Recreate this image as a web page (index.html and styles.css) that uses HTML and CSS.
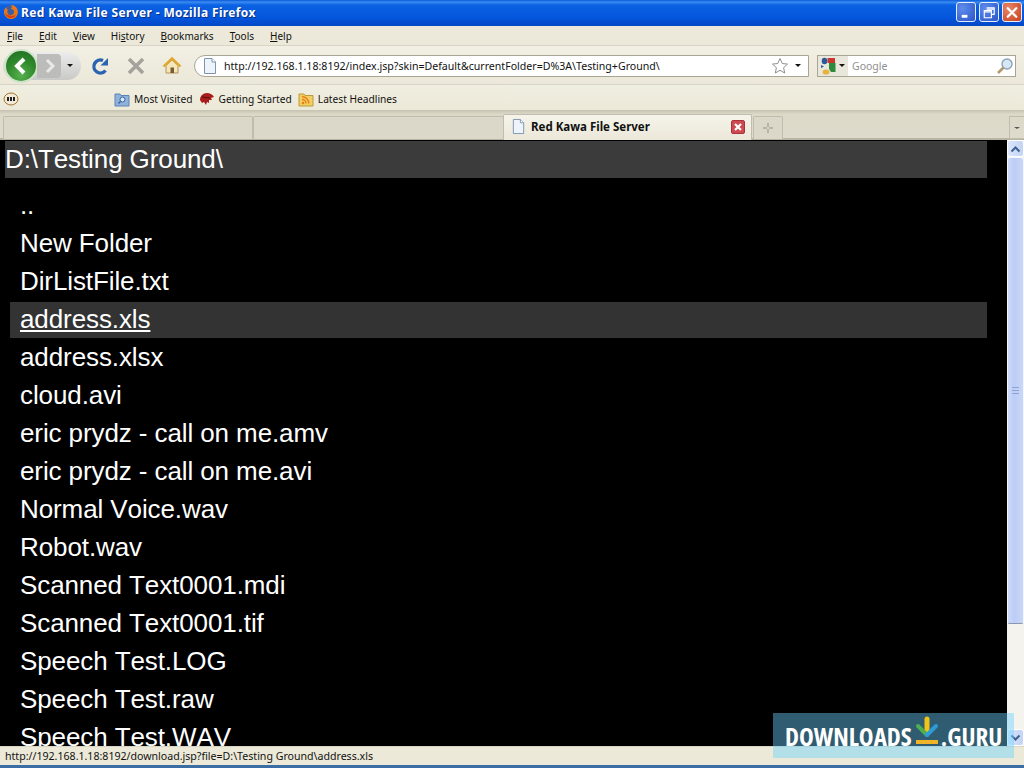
FILE: index.html
```html
<!DOCTYPE html>
<html lang="en">
<head>
<meta charset="utf-8">
<title>Red Kawa File Server - Mozilla Firefox</title>
<link rel="stylesheet" href="styles.css">
</head>
<body>
<div class="window">
  <header class="titlebar">
    <svg class="fx" width="16" height="16" viewBox="0 0 16 16"><circle cx="8" cy="8" r="7" fill="#3d5f9e"/><path d="M8 1a7 7 0 1 1-6.6 4.6C2 4 3 3.400 3.500 3.600 3.500 5 4 5.500 5 6c-1 1-1 3 .5 4.500 2 1.500 5 .5 5.500-2 .3-2-1-3.500-3-3.500C9 3.500 9 2 8 1z" fill="#e8761c"/><path d="M2 9c1 3 3 5 6 5 2 0 4-1 5-3-2 1-6 2-11-2z" fill="#d8400f"/></svg>
    <span class="title-text">Red Kawa File Server - Mozilla Firefox</span>
    <div class="win-buttons">
      <span class="win-btn"><svg width="19" height="19" viewBox="0 0 19 19"><rect x="5" y="12" width="6" height="3" fill="#fff"/></svg></span>
      <span class="win-btn"><svg width="19" height="19" viewBox="0 0 19 19"><path d="M7 4.500h8v7h-3M4.500 7.500h7.500v7.500H4.500zM4.500 9h7.500M7 6h8" fill="none" stroke="#fff" stroke-width="1.200"/></svg></span>
      <span class="win-btn close"><svg width="19" height="19" viewBox="0 0 19 19"><path d="M5 5l9 9M14 5l-9 9" stroke="#fff" stroke-width="2.400" stroke-linecap="round"/></svg></span>
    </div>
  </header>

  <nav class="menubar">
    <span><u>F</u>ile</span><span><u>E</u>dit</span><span><u>V</u>iew</span><span>Hi<u>s</u>tory</span><span><u>B</u>ookmarks</span><span><u>T</u>ools</span><span><u>H</u>elp</span>
  </nav>

  <div class="navbar">
    <div class="backforward">
      <span class="back"><svg width="30" height="30" viewBox="0 0 30 30"><path d="M18 8l-7 7 7 7" fill="none" stroke="#fff" stroke-width="4"/></svg></span>
      <span class="forward"><svg width="18" height="18" viewBox="0 0 18 18"><path d="M7 3l6 6-6 6" fill="none" stroke="#e8e8e8" stroke-width="3"/></svg></span>
      <span class="caret small"></span>
    </div>
    <svg class="tool reload" width="20" height="20" viewBox="0 0 20 20"><path d="M15.500 14.500A6.500 6.500 0 1 1 13 4.500" fill="none" stroke="#2a63b0" stroke-width="3.400"/><path d="M10.500 9.500l7.500 0 0-7.500z" fill="#2a63b0"/></svg>
    <svg class="tool stop" width="20" height="20" viewBox="0 0 20 20"><path d="M3 3l14 14M17 3L3 17" stroke="#a3a39c" stroke-width="3.600"/></svg>
    <svg class="tool home" width="20" height="20" viewBox="0 0 20 20"><path d="M4 9.500V17h12V9.500L10 4z" fill="#f3e6b8" stroke="#b5945a"/><path d="M1.500 10.500L10 2.500l8.500 8" fill="none" stroke="#e2a72c" stroke-width="2.400"/><rect x="8.500" y="11.500" width="3.500" height="5.500" fill="#7a5a30"/></svg>
    <div class="urlbar">
      <svg width="16" height="18" viewBox="0 0 16 18"><path d="M2.500 1.500h7.500l3.500 3.500v11.500h-11z" fill="#eef4fb" stroke="#7f93ad"/><path d="M10 1.500V5h3.500" fill="#fff" stroke="#7f93ad"/></svg>
      <span class="url">http://192.168.1.18:8192/index.jsp?skin=Default&amp;currentFolder=D%3A\Testing+Ground\</span>
      <svg width="18" height="18" viewBox="0 0 18 18"><path d="M9 1.500l2.300 5 5.200.6-3.900 3.600 1.100 5.300L9 13.300 4.300 16l1.100-5.300L1.500 7.100l5.200-.6z" fill="#fff" stroke="#8d8d88"/></svg>
      <span class="caret small url-caret"></span>
    </div>
    <div class="searchbar">
      <span class="engine">
        <svg width="17" height="18" viewBox="0 0 17 18"><ellipse cx="4.500" cy="4" rx="2.800" ry="3.200" fill="#2b5a9b"/><path d="M7.500 1H15v5H7.500z" fill="#c8382d"/><path d="M9 6h6.500v9H11l-2-3z" fill="#2e8b3c"/><ellipse cx="6" cy="15" rx="3.400" ry="2.600" fill="#e5b33c"/><path d="M1 8l3 1.500L1 11z" fill="#2b5a9b"/></svg>
        <span class="caret small"></span>
      </span>
      <span class="search-hint">Google</span>
      <svg class="lens" width="18" height="18" viewBox="0 0 18 18"><circle cx="11" cy="7" r="5" fill="#d8e7f5" stroke="#8aa3bb" stroke-width="1.400"/><path d="M7.500 10.500L2 16" stroke="#b39a6c" stroke-width="2.600"/></svg>
    </div>
  </div>

  <div class="bookmarks">
    <svg class="addon" width="16" height="14" viewBox="0 0 16 14"><ellipse cx="8" cy="7" rx="7" ry="6" fill="#f2ead8" stroke="#a5762f"/><path d="M5 5v4M8 5v4M11 5v4" stroke="#222" stroke-width="2"/></svg>
    <span class="bm first"><svg width="16" height="16" viewBox="0 0 16 16"><path d="M1 3h5l1 1.500h8V15H1z" fill="#8fb2dd" stroke="#5e83b5"/><circle cx="8.500" cy="8.500" r="2.500" fill="#dbe9f7" stroke="#37639c"/><path d="M6.500 10.500L4.500 12.500" stroke="#37639c" stroke-width="1.500"/></svg>Most Visited</span>
    <span class="bm"><svg width="16" height="16" viewBox="0 0 16 16"><path d="M1 9c0-4 3-7 7-7 3 0 5 1 7 4l-3 1 1 2-3 0 0 3-2-1-1 3-2-3-2 1z" fill="#a81c1c"/><path d="M3 6l8 1" stroke="#5a0c0c"/></svg>Getting Started</span>
    <span class="bm"><svg width="16" height="16" viewBox="0 0 16 16"><path d="M1 3h5l1 1.500h8V15H1z" fill="#f2cf62" stroke="#bc9a3a"/><circle cx="5" cy="12" r="1.300" fill="#e77f1a"/><path d="M4 8.500a4 4 0 0 1 4 4M4 5.800a6.500 6.500 0 0 1 6.800 6.700" fill="none" stroke="#e77f1a" stroke-width="1.500"/></svg>Latest Headlines</span>
  </div>

  <div class="tabbar">
    <span class="tab tab-a"></span>
    <span class="tab tab-b"></span>
    <span class="tab active">
      <svg width="15" height="17" viewBox="0 0 16 18"><path d="M2.500 1.500h7.500l3.500 3.500v11.500h-11z" fill="#eef4fb" stroke="#7f93ad"/><path d="M10 1.500V5h3.500" fill="#fff" stroke="#7f93ad"/></svg>
      <span class="tab-title">Red Kawa File Server</span>
      <span class="tab-close"><svg width="14" height="14" viewBox="0 0 14 14"><path d="M4 4l6 6M10 4l-6 6" stroke="#fff" stroke-width="2.200"/></svg></span>
    </span>
    <span class="tab newtab"><svg width="10" height="10" viewBox="0 0 10 10"><path d="M5 0v4M5 6v4M0 5h4M6 5h4" stroke="#8f8f86"/></svg></span>
    <span class="tablist"><span class="caret tiny"></span></span>
  </div>

  <div class="viewport">
    <main class="page">
      <h1 class="folder">D:\Testing Ground\</h1>
      <ul class="files">
        <li>..</li>
        <li>New Folder</li>
        <li>DirListFile.txt</li>
        <li class="hover"><a href="#">address.xls</a></li>
        <li>address.xlsx</li>
        <li>cloud.avi</li>
        <li>eric prydz - call on me.amv</li>
        <li>eric prydz - call on me.avi</li>
        <li>Normal Voice.wav</li>
        <li>Robot.wav</li>
        <li>Scanned Text0001.mdi</li>
        <li>Scanned Text0001.tif</li>
        <li>Speech Test.LOG</li>
        <li>Speech Test.raw</li>
        <li>Speech Test.WAV</li>
      </ul>
    </main>
    <aside class="scrollbar">
      <span class="sb-btn"><svg width="11" height="8" viewBox="0 0 11 8"><path d="M1.500 6.500l4-4 4 4" fill="none" stroke="#41608f" stroke-width="2"/></svg></span>
      <span class="sb-thumb"><span class="grip"></span></span>
      <span class="sb-rest"></span>
      <span class="sb-btn"><svg width="11" height="8" viewBox="0 0 11 8"><path d="M1.500 1.500l4 4 4-4" fill="none" stroke="#41608f" stroke-width="2"/></svg></span>
    </aside>
  </div>

  <footer class="statusbar">http://192.168.1.18:8192/download.jsp?file=D:\Testing Ground\address.xls</footer>
  <div class="frame-bottom"></div>

  <div class="watermark">
    <span>DOWNLOADS</span>
    <svg width="26" height="30" viewBox="2 0 26 30"><path d="M15 3v12" stroke="#f0c419" stroke-width="5" stroke-linecap="round"/><path d="M6 10l9 9" stroke="#4caf50" stroke-width="4" stroke-linecap="round"/><path d="M24 10l-9 9" stroke="#2e9bd6" stroke-width="4" stroke-linecap="round"/><rect x="4" y="24" width="22" height="4" fill="#f0b429"/></svg>
    <span>.GURU</span>
  </div>
</div>
</body>
</html>
```

FILE: styles.css
```css
* { box-sizing: border-box; }
html, body { margin: 0; height: 100%; overflow: hidden; }
body { background: #ece9d8; }
.window {
  position: relative;
  width: 1024px;
  height: 768px;
  display: flex;
  flex-direction: column;
  overflow: hidden;
  font-family: "Noto Sans", "DejaVu Sans", sans-serif;
  font-size: 11px;
  color: #111;
}
.titlebar {
  height: 26px;
  flex: none;
  display: flex;
  align-items: center;
  padding: 0 2px 0 3px;
  background: linear-gradient(#0a58d8 0, #3a8cf2 2px, #0c62e2 5px, #0455dc 18px, #0448c4 26px);
}
.fx { flex: none; margin-bottom: 2px; }
.title-text {
  margin-left: 2px;
  color: #fff;
  font-weight: 700;
  font-size: 12px;
  text-shadow: 1px 1px 0 #0a2f85;
  letter-spacing: .36px;
  margin-bottom: 2px;
}
.win-buttons { margin-left: auto; display: flex; gap: 3px; margin-bottom: 3px; }
.win-btn {
  width: 20px; height: 20px;
  border: 1px solid #e6eefb;
  border-radius: 3px;
  background: radial-gradient(circle at 30% 30%, #5f8cec, #2a55c8);
  display: flex;
}
.win-btn.close { background: radial-gradient(circle at 30% 30%, #e8876a, #c83f1c); }

.menubar {
  height: 20px;
  flex: none;
  display: flex;
  align-items: center;
  gap: 16px;
  padding: 0 0 0 7px;
  background: #ece9da;
  border-bottom: 1px solid #d8d5c4;
  font-size: 10px;
}
.navbar {
  height: 39px;
  flex: none;
  display: flex;
  align-items: center;
  padding: 1px 8px 0 3px;
  background: linear-gradient(#f2f0e4, #ebe8d9);
  border-bottom: 1px solid #d8d5c4;
}
.backforward {
  width: 78px;
  height: 28px;
  display: flex;
  align-items: center;
  background: linear-gradient(#ececec, #c9c9c6);
  border-radius: 14px;
  position: relative;
  flex: none;
}
.back {
  width: 34px; height: 34px;
  margin-left: 1px;
  flex: none;
  border-radius: 50%;
  border: 2px solid #cfe3c8;
  background: radial-gradient(circle at 50% 80%, #58b04e, #2f8a2c 50%, #1f6a22);
  display: flex;
  align-items: center;
  justify-content: center;
}
.forward {
  width: 24px; height: 24px;
  margin-left: -1px;
  display: flex;
  align-items: center;
  justify-content: center;
  background: #bcbcba;
  border-radius: 0 4px 4px 0;
}
.caret { width: 0; height: 0; display: inline-block; border-style: solid; border-color: #111 transparent transparent; }
.caret.small { border-width: 3px 3px 0; margin-left: 6px; }
.caret.tiny { border-width: 2px 3px 0; border-color: #555 transparent transparent; }
.tool { flex: none; }
.reload { margin-left: 9px; }
.stop { margin-left: 16px; }
.home { margin-left: 16px; }
.urlbar {
  margin-left: 12px;
  width: 615px;
  height: 22px;
  display: flex;
  align-items: center;
  padding: 0 6px 0 7px;
  border: 1px solid #a8a595;
  border-radius: 11px 0 0 11px;
  background: #fff;
  font-size: 10.600px;
}
.url { margin-left: 6px; flex: 1; white-space: nowrap; overflow: hidden; }
.url-caret { margin-left: 11px; margin-right: 1px; }
.searchbar {
  margin-left: 8px;
  width: 199px;
  height: 22px;
  display: flex;
  align-items: center;
  border: 1px solid #a8a595;
  background: #fff;
}
.engine {
  width: 30px; height: 20px;
  display: flex;
  align-items: center;
  padding-left: 2px;
  background: #e9e7dc;
  flex: none;
}
.engine .caret.small { margin-left: 2px; }
.search-hint { margin-left: 4px; color: #8f8f8f; font-size: 10.500px; flex: 1; }
.lens { margin-right: 1px; }

.bookmarks {
  height: 25px;
  flex: none;
  display: flex;
  align-items: center;
  padding: 2px 0 0 3px;
  background: linear-gradient(#f0eee0, #ece9d8);
  font-size: 10.200px;
}
.addon { flex: none; }
.bm { display: flex; align-items: center; gap: 4px; margin-left: 6px; }
.bm.first { margin-left: 95px; }

.tabbar {
  height: 30px;
  flex: none;
  display: flex;
  align-items: flex-end;
  background: linear-gradient(#c4c1b0 0, #dcd9c9 4px, #dedbcc 100%);
  border-bottom: 2px solid #b8b5a5;
  position: relative;
}
.tab {
  height: 23px;
  display: flex;
  align-items: center;
  background: #dbd8c9;
  border: 1px solid #c0bdac;
  border-bottom: 0;
  border-radius: 2px 2px 0 0;
  margin-bottom: -1px;
}
.tab-a { width: 250px; margin-left: 3px; }
.tab-b { width: 251px; }
.tab.active {
  width: 249px;
  height: 26px;
  margin-left: -1px;
  padding: 0 6px 2px 7px;
  background: linear-gradient(#f6f4ea, #ebe8da);
  position: relative;
  z-index: 1;
  margin-bottom: -2px;
}
.tab-title { margin-left: 5px; font-weight: 700; font-size: 11.500px; flex: 1; }
.tab-close {
  width: 14px; height: 14px;
  display: flex;
  border-radius: 2px;
  background: #cf4a50;
  border: 1px solid #a8343a;
}
.tab-close svg { margin: -1px; }
.newtab { width: 30px; margin-left: 1px; justify-content: center; }
.tablist {
  margin-left: auto;
  width: 15px; height: 23px;
  display: flex;
  align-items: center;
  justify-content: center;
  border: 1px solid #c0bdac;
  border-right: 0;
  margin-bottom: -1px;
}

.viewport {
  flex: 1;
  min-height: 0;
  display: flex;
  background: #000;
}
.page {
  flex: 1;
  min-width: 0;
  overflow: hidden;
  color: #fff;
  font-family: "Liberation Sans", Arial, sans-serif;
  font-size: 26px;
  font-kerning: none;
  letter-spacing: -.1px;
  padding: 1px 20px 0 5px;
}
.folder {
  margin: 0;
  height: 37px;
  line-height: 36px;
  font-size: 26px;
  font-weight: 400;
  background: #3b3b3b;
}
.files {
  list-style: none;
  margin: 10px 0 0 5px;
  padding: 0;
}
.files li {
  height: 36px;
  line-height: 34px;
  margin-bottom: 2px;
  padding-left: 10px;
  white-space: nowrap;
}
.files a { color: inherit; text-decoration: underline; }
.files .hover { background: #333; }

.scrollbar {
  width: 17px;
  flex: none;
  display: flex;
  flex-direction: column;
  background: #f4f3ed;
}
.sb-btn {
  height: 17px;
  flex: none;
  display: flex;
  align-items: center;
  justify-content: center;
  background: linear-gradient(90deg, #dce6fb, #c3d3f6);
  border: 1px solid #fff;
  border-radius: 3px;
}
.sb-thumb {
  height: 467px;
  flex: none;
  display: flex;
  align-items: center;
  justify-content: center;
  background: linear-gradient(90deg, #cddafa, #bccdf5 40%, #c9d7f8);
  border: 1px solid #f4f6fd;
  border-bottom-color: #8a97b3;
  border-radius: 3px;
}
.grip {
  width: 7px; height: 7px;
  border-top: 1px solid #8da4d6;
  border-bottom: 1px solid #8da4d6;
  background: linear-gradient(transparent 40%, #8da4d6 40%, #8da4d6 60%, transparent 60%);
}
.sb-rest { flex: 1; }

.statusbar {
  height: 19px;
  flex: none;
  padding: 1px 0 0 5px;
  background: #ece9d8;
  border-top: 1px solid #d8d5c4;
  font-size: 10.600px;
  line-height: 16px;
  position: relative;
}
.frame-bottom { height: 3px; flex: none; background: #3a6ea5; }

.watermark {
  position: absolute;
  left: 773px;
  top: 713px;
  width: 241px;
  height: 45px;
  display: flex;
  align-items: flex-start;
  padding: 9px 0 0 12px;
  background: rgba(107, 210, 255, .44);
  color: #fff;
  font-family: "Open Sans", "Noto Sans", sans-serif;
  font-stretch: 75%;
  font-weight: 700;
  font-size: 25px;
  line-height: 28px;
  white-space: nowrap;
}
.watermark svg { margin: -6px 1px 0 2px; flex: none; }
```
